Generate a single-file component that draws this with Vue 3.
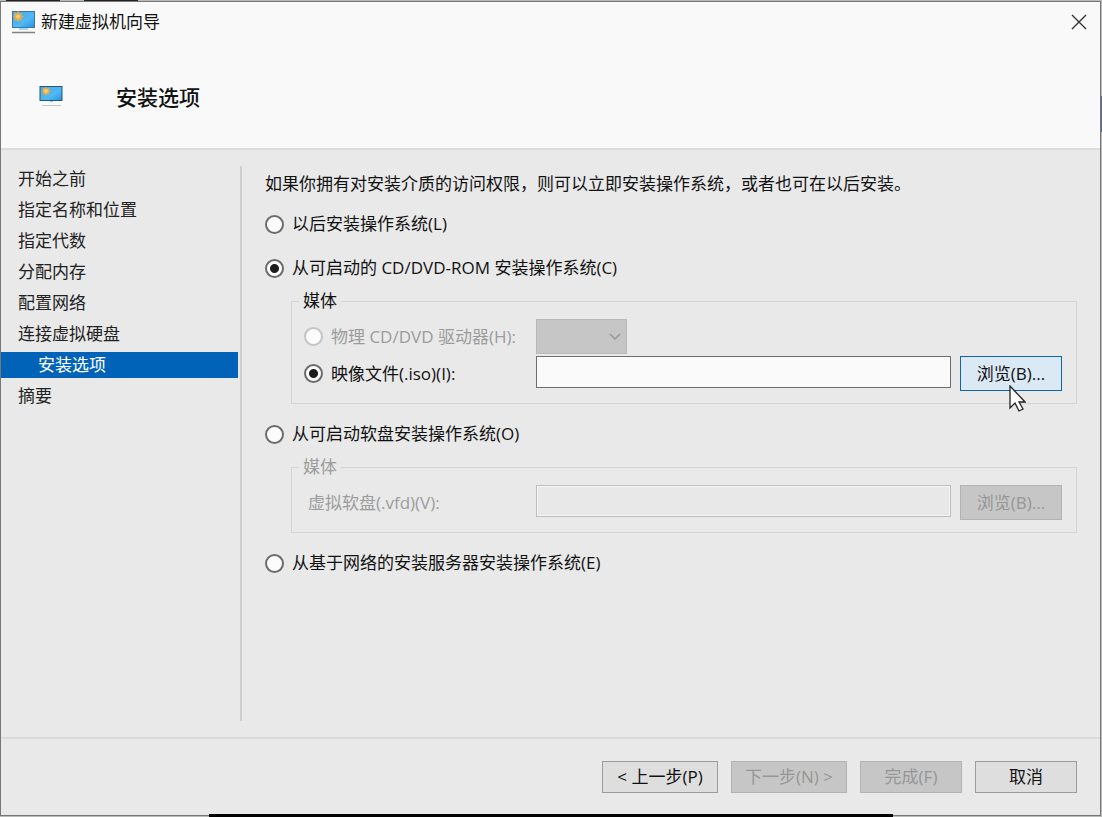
<template>
  <div class="desktop">
    <div class="window">

      <!-- Title bar and page heading -->
      <header class="header">
        <div class="titlebar">
          <svg class="icon" viewBox="0 0 24 24" aria-hidden="true">
            <defs>
              <linearGradient id="screen" x1="0" y1="0" x2="1" y2="1">
                <stop offset="0" stop-color="#4aa6e4" />
                <stop offset="0.6" stop-color="#4fb9f5" />
                <stop offset="1" stop-color="#2a90dc" />
              </linearGradient>
            </defs>
            <rect x="0.5" y="1.5" width="22" height="16" fill="url(#screen)" stroke="#3b78a8" />
            <path d="M6 1l1.400 2.200 2.600-.6-.6 2.500L12 6.500 9.400 7.900l.6 2.600-2.600-.6L6 12.300l-1.400-2.400-2.600.6.6-2.600L1 6.500l1.600-1.400L2 2.600l2.600.6z" fill="#e2ad4e" />
            <circle cx="6" cy="6.500" r="2" fill="#f3cd7a" />
            <path d="M7 19h9" stroke="#6fb2e0" />
            <path d="M0 22.500h23" stroke="#7f8386" stroke-width="1.500" />
          </svg>
          <span class="title">新建虚拟机向导</span>
          <button class="close" type="button" aria-label="关闭">
            <svg viewBox="0 0 16 16" aria-hidden="true">
              <path d="M1 1L15 15M15 1L1 15" stroke="#333" stroke-width="1.400" fill="none" />
            </svg>
          </button>
        </div>
        <div class="heading">
          <svg class="icon" viewBox="0 0 24 24" aria-hidden="true">
            <rect x="1" y="1.500" width="22" height="14" fill="url(#screen)" stroke="#24577f" />
            <path d="M7 1.500l1.200 1.800 2.300-.6-.5 2.200L12.200 6.100 10 7.300l.5 2.300-2.300-.5L7 11.200l-1.200-2.100-2.300.5.5-2.300L2 6.100l2-1.200-.5-2.200 2.300.6z" fill="#e2ad4e" />
            <circle cx="7" cy="6.100" r="2" fill="#f3cd7a" />
            <path d="M11 16.500h3" stroke="#9cc9e8" />
            <path d="M3 20.500h19" stroke="#c4c7ca" />
          </svg>
          <h1>安装选项</h1>
        </div>
      </header>

      <div class="body">
        <!-- Wizard steps -->
        <nav class="steps">
          <a
            v-for="step in steps"
            :key="step"
            href="#"
            :class="{ active: step === current }"
            @click.prevent
          >{{ step }}</a>
        </nav>

        <main class="content">
          <p>如果你拥有对安装介质的访问权限，则可以立即安装操作系统，或者也可在以后安装。</p>

          <label class="option">
            <input type="radio" name="install" value="later" v-model="install" />
            以后安装操作系统(L)
          </label>

          <label class="option">
            <input type="radio" name="install" value="cd" v-model="install" />
            从可启动的 CD/DVD-ROM 安装操作系统(C)
          </label>

          <fieldset :disabled="install !== 'cd'">
            <legend>媒体</legend>
            <div class="row">
              <label class="choice disabled">
                <input type="radio" name="media" value="drive" v-model="media" disabled />
                物理 CD/DVD 驱动器(H):
              </label>
              <div class="select">
                <select aria-label="物理 CD/DVD 驱动器" disabled></select>
                <svg viewBox="0 0 12 8" aria-hidden="true">
                  <path d="M1 1l5 5 5-5" stroke="#979797" stroke-width="1.500" fill="none" />
                </svg>
              </div>
            </div>
            <div class="row">
              <label class="choice">
                <input type="radio" name="media" value="iso" v-model="media" />
                映像文件(.iso)(I):
              </label>
              <input class="text" type="text" v-model="isoPath" aria-label="映像文件" />
              <div class="browse">
                <button class="hover" type="button">浏览(B)...</button>
                <svg class="pointer" viewBox="0 0 17 27" aria-hidden="true">
                  <path d="M1 1v22l5-5 4 8 4-2-4-7h6z" fill="#fff" stroke="#222" stroke-width="1.300" />
                </svg>
              </div>
            </div>
          </fieldset>

          <label class="option after">
            <input type="radio" name="install" value="floppy" v-model="install" />
            从可启动软盘安装操作系统(O)
          </label>

          <fieldset :disabled="install !== 'floppy'">
            <legend>媒体</legend>
            <div class="row">
              <label class="floppy" for="vfd">虚拟软盘(.vfd)(V):</label>
              <input id="vfd" class="text" type="text" v-model="vfdPath" />
              <div class="browse">
                <button type="button">浏览(B)...</button>
              </div>
            </div>
          </fieldset>

          <label class="option after">
            <input type="radio" name="install" value="network" v-model="install" />
            从基于网络的安装服务器安装操作系统(E)
          </label>
        </main>
      </div>

      <footer class="footer">
        <button class="wide" type="button">&lt; 上一步(P)</button>
        <button class="wide" type="button" disabled>下一步(N) &gt;</button>
        <button type="button" disabled>完成(F)</button>
        <button type="button">取消</button>
      </footer>

    </div>
  </div>
</template>

<script setup>
import { ref } from "vue"

const steps = [
  "开始之前",
  "指定名称和位置",
  "指定代数",
  "分配内存",
  "配置网络",
  "连接虚拟硬盘",
  "安装选项",
  "摘要"
]

const current = ref("安装选项")
const install = ref("cd")
const media = ref("iso")
const isoPath = ref("")
const vfdPath = ref("")
</script>

<style>
body {
  margin: 0;
}
</style>

<style scoped>
.desktop {
  position: relative;
  display: flex;
  min-height: 100vh;
  box-sizing: border-box;
  padding: 1px 1px 1px 0;
  /* slivers of the windows behind the dialog */
  background:
    linear-gradient(#4f6f96, #4f6f96) 100% 96px / 1px 36px no-repeat,
    linear-gradient(#222, #222) 6px 0 / 54px 1px no-repeat,
    linear-gradient(#222, #222) 84px 0 / 54px 1px no-repeat,
    #b9bbb8;
  font-family: "Open Sans", "Noto Sans CJK SC", sans-serif;
  font-size: 17px;
  line-height: 24px;
  color: #111;
}

/* taskbar edge over the bottom of the dialog */
.desktop::after {
  content: "";
  position: absolute;
  left: 19%;
  right: 19%;
  bottom: 0;
  height: 3px;
  background: #000;
}

.window {
  flex: 1;
  display: flex;
  flex-direction: column;
  border: 1px solid #777;
  background: #e9e9e9;
}

.header {
  height: 146px;
  border-bottom: 2px solid #dcdcdc;
  background: #f9f9f9;
}

.titlebar {
  display: flex;
  align-items: center;
  height: 40px;
  padding: 0 13px 0 11px;
}

.icon {
  width: 24px;
  height: 24px;
}

.title {
  flex: 1;
  margin-left: 5px;
}

.close {
  display: flex;
  width: 16px;
  height: 16px;
  min-width: 0;
  padding: 0;
  border: none;
  background: none;
}

.heading {
  display: flex;
  align-items: center;
  gap: 53px;
  padding: 39px 0 0 38px;
}

h1 {
  margin: 0;
  font-size: 21px;
  font-weight: 500;
  line-height: 32px;
}

.body {
  flex: 1;
  display: flex;
  padding: 16px 0;
}

.steps {
  display: flex;
  flex-direction: column;
  gap: 5px;
  width: 237px;
  padding-right: 2px;
  border-right: 2px solid #cfcfcf;
}

.steps a {
  padding-left: 17px;
  line-height: 26px;
  color: #222;
  text-decoration: none;
}

.steps a.active {
  padding-left: 37px;
  background: #0063b8;
  color: #fff;
}

.content {
  flex: 1;
  padding: 6px 23px 0;
}

p {
  margin: 0 0 16px;
}

.option {
  display: flex;
  align-items: center;
  gap: 8px;
  width: fit-content;
  margin-bottom: 20px;
}

.option.after {
  margin-top: 18px;
}

.option:has(+ fieldset) {
  margin-bottom: 9px;
}

input[type="radio"] {
  appearance: none;
  flex: none;
  width: 19px;
  height: 19px;
  margin: 0;
  border: 2px solid #6c6c6c;
  border-radius: 50%;
  background: #fcfcfc;
}

input[type="radio"]:checked {
  background: radial-gradient(circle, #1c1c1c 4px, #fcfcfc 5px);
}

input[type="radio"]:disabled {
  border-color: #c4c4c4;
}

fieldset {
  display: flex;
  flex-direction: column;
  gap: 2px;
  min-width: 0;
  margin: 0 0 0 26px;
  padding: 6px 14px 12px 12px;
  border: 1px solid #d4d4d4;
}

legend {
  margin-left: -5px;
  padding: 0 4px;
}

fieldset:disabled {
  color: #9c9c9c;
}

.row {
  display: grid;
  grid-template-columns: 232px 1fr 102px;
  height: 35px;
}

.choice {
  display: flex;
  align-items: center;
  gap: 8px;
}

.disabled {
  color: #9c9c9c;
}

.floppy {
  align-self: center;
  padding-left: 4px;
}

.select {
  position: relative;
  width: 91px;
}

select {
  appearance: none;
  width: 100%;
  height: 35px;
  border: 1px solid #b8b8b8;
  border-radius: 0;
  background: #c6c6c6;
  opacity: 1;
}

.select svg {
  position: absolute;
  right: 6px;
  top: 14px;
  width: 12px;
  height: 8px;
}

.text {
  height: 32px;
  min-width: 0;
  margin-right: 9px;
  box-sizing: border-box;
  padding: 0 6px;
  border: 1px solid #6e6e6e;
  background: #fafafa;
  font: inherit;
}

.text:disabled {
  border: 1px solid #bdbdbd;
  background: #e8e8e8;
  box-shadow: inset 0 0 0 1px #f5f5f5;
}

button {
  min-width: 102px;
  height: 32px;
  padding: 0;
  border: 1px solid #9c9c9c;
  background: #dedede;
  color: #111;
  font: inherit;
}

button:disabled {
  border-color: #b3b3b3;
  background: #c6c6c6;
  color: #969696;
}

.browse {
  position: relative;
}

.browse button {
  width: 100%;
  height: 35px;
}

button.hover {
  border: 1px solid #0b66ae;
  background: #dbe9f5;
}

.pointer {
  position: absolute;
  left: 49px;
  top: 29px;
  width: 17px;
  height: 27px;
}

.footer {
  display: flex;
  justify-content: flex-end;
  gap: 13px;
  padding: 22px 23px 22px;
  border-top: 2px solid #dadada;
}

.wide {
  min-width: 116px;
}
</style>
